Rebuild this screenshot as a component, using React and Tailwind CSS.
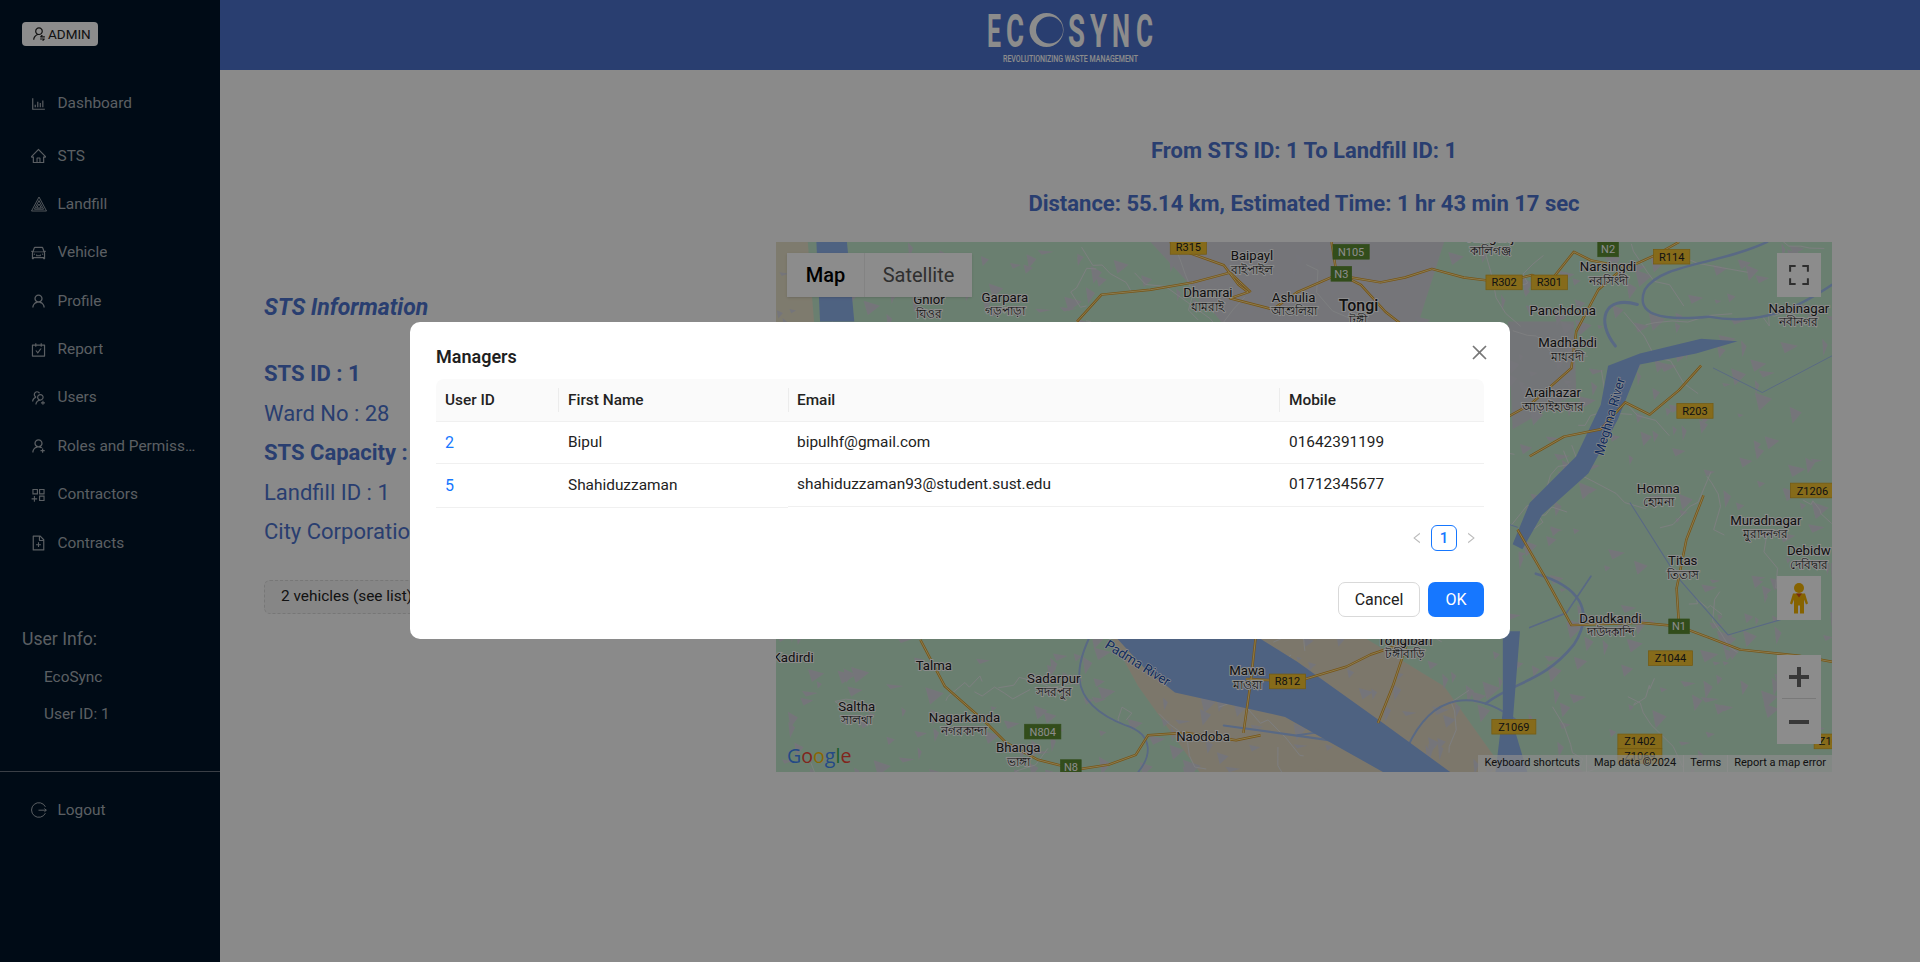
import { AiOutlineBarChart, AiOutlineHome, AiOutlineCar, AiOutlineUser, AiOutlineCarryOut, AiOutlineUsergroupAdd, AiOutlineUserAdd, AiOutlineAppstoreAdd, AiOutlineFileAdd, AiOutlineClose, AiOutlineLeft, AiOutlineRight, AiOutlineUserSwitch } from "react-icons/ai";

const LandfillIcon = ({ className }) => (
  <svg viewBox="0 0 16 16" className={className} fill="none" stroke="currentColor" strokeWidth="0.9">
    <path d="M8 1 15.5 15H.5z" />
    <path d="M8 4.6 12.6 13.2H3.4z" />
    <path d="M8 8 10.4 12H5.6z" />
  </svg>
);

const LogoutIcon = ({ className }) => (
  <svg viewBox="0 0 16 16" className={className} fill="none" stroke="currentColor" strokeWidth="1">
    <path d="M14.4 4.8A7.3 7.3 0 1 0 14.4 11.2" />
    <path d="M7.5 8.2h7.8M13.4 6.6l1.9 1.6-1.9 1.6" />
  </svg>
);

const NAV = [
  { label: "Dashboard", icon: AiOutlineBarChart, cls: "mb-1" },
  { label: "STS", icon: AiOutlineHome },
  { label: "Landfill", icon: LandfillIcon, small: true },
  { label: "Vehicle", icon: AiOutlineCar },
  { label: "Profile", icon: AiOutlineUser },
  { label: "Report", icon: AiOutlineCarryOut },
  { label: "Users", icon: AiOutlineUsergroupAdd },
  { label: "Roles and Permissions", icon: AiOutlineUserAdd },
  { label: "Contractors", icon: AiOutlineAppstoreAdd },
  { label: "Contracts", icon: AiOutlineFileAdd },
];

const ROWS = [
  { id: 2, name: "Bipul", email: "bipulhf@gmail.com", mobile: "01642391199" },
  { id: 5, name: "Shahiduzzaman", email: "shahiduzzaman93@student.sust.edu", mobile: "01712345677" },
];

function rng(seed) {
  let s = seed;
  return () => {
    s = (s * 16807) % 2147483647;
    return s / 2147483647;
  };
}

// scattered grey patches of the terrain tiles
function makePatches() {
  const r = rng(77);
  const out = [];
  for (let i = 0; i < 760; i++) {
    const x = 634 + r() * 863;
    const y = 197 + r() * 433;
    const a = 3 + r() * 12;
    const b = 3 + r() * 12;
    out.push(`${x.toFixed(1)},${y.toFixed(1)} ${(x + a).toFixed(1)},${(y + b * 0.35).toFixed(1)} ${(x + a * 0.25).toFixed(1)},${(y + b).toFixed(1)}`);
  }
  return out;
}

// thin pale local roads
function makeLanes() {
  const r = rng(4242);
  const out = [];
  for (let i = 0; i < 70; i++) {
    let x = 634 + r() * 863;
    let y = 197 + r() * 433;
    let d = `M${x.toFixed(1)} ${y.toFixed(1)}`;
    const dx = (r() - 0.5) * 26;
    const dy = (r() - 0.5) * 26;
    for (let k = 0; k < 5; k++) {
      x += dx + (r() - 0.5) * 18;
      y += dy + (r() - 0.5) * 18;
      d += `L${x.toFixed(1)} ${y.toFixed(1)}`;
    }
    out.push(d);
  }
  return out;
}

const PATCHES = makePatches();
const LANES = makeLanes();

const PLACES = [
  ["Garpara", 821, 246, "গড়পাড়া"], ["Ghior", 759, 248, "ঘিওর"], ["Dhamrai", 987, 242, "ধামরাই"], ["Baipayl", 1023, 212, "বাইপাইল"],
  ["Ashulia", 1057, 246, "আশুলিয়া"], ["Narsingdi", 1314, 221, "নরসিংদী"], ["Panchdona", 1277, 257], ["Madhabdi", 1281, 283, "মাধবদী"],
  ["Araihazar", 1269, 324, "আড়াইহাজার"], ["Nabinagar", 1470, 255, "নবীনগর"], ["Homna", 1355, 402, "হোমনা"], ["Muradnagar", 1443, 428, "মুরাদনগর"],
  ["Debidw", 1478, 453, "দেবিদ্বার"], ["Titas", 1375, 461, "তিতাস"], ["Daudkandi", 1316, 508, "দাউদকান্দি"], ["Kadirdi", 648, 540],
  ["Talma", 763, 547], ["Sadarpur", 861, 557, "সদরপুর"], ["Saltha", 700, 580, "সালথা"], ["Nagarkanda", 788, 589, "নগরকান্দা"],
  ["Bhanga", 832, 614, "ভাঙ্গা"], ["Mawa", 1019, 551, "মাওয়া"], ["Naodoba", 983, 605], ["Tongibari", 1148, 526, "টঙ্গীবাড়ি"], ["Kaliganj", 1218, 197, "কালিগঞ্জ"],
];

const SHIELDS = [
  ["R315", 971, 201, 1], ["N105", 1104, 205, 0], ["N3", 1096, 223, 0], ["N2", 1314, 203, 0], ["R114", 1366, 209, 1], ["R302", 1229, 230, 1],
  ["R301", 1266, 230, 1], ["R203", 1385, 335, 1], ["Z1206", 1481, 400, 1], ["N1", 1372, 511, 0], ["Z1044", 1365, 537, 1], ["Z1069", 1237, 593, 1],
  ["Z1402", 1340, 605, 1], ["Z1069", 1340, 617, 1], ["R812", 1052, 556, 1], ["N804", 852, 597, 0], ["N8", 875, 626, 0], ["Z10", 1494, 605, 1],
];

const ROADS = [
  "M956 197 972 206 1000 216 1012 232 1020 238 1005 243 1040 252 1060 238 1092 224 1128 230 1148 226 1170 219 1196 226 1228 230 1252 224 1266 230 1286 205 1300 212 1330 218 1352 208 1372 197",
  "M1088 197 1092 222 1112 232 1132 254 1150 268 1156 290 1178 318 1196 340 1210 352",
  "M880 262 900 240 940 236 975 230 1005 222 1022 238",
  "M1210 352 1250 330 1284 300 1288 270 1306 236 1322 222",
  "M752 522 772 560 806 590 822 606 848 620 880 628 906 624 928 616 938 600 968 598 1010 604 1030 600",
  "M1026 520 1022 556 1016 598",
  "M1018 554 1060 556 1100 544 1120 534 1150 524",
  "M1240 432 1262 470 1284 510 1340 508 1372 511 1396 520 1422 530 1470 535 1497 540",
  "M1372 511 1370 480 1378 440 1392 404",
  "M1390 298 1372 318 1348 338 1328 328 1308 350 1278 356 1250 372",
  "M1150 524 1138 560 1126 590",
];

const STREAMS = [
  ["M1444 197C1404 216 1358 214 1344 236 1336 256 1356 262 1396 258 1440 266 1470 250 1497 232", 2],
  ["M1338 248C1310 240 1304 262 1320 282", 2.5],
  ["M1255 468C1290 478 1304 498 1286 526 1262 556 1238 556 1214 574", 2.2],
  ["M1242 590C1204 560 1170 566 1150 610 1120 600 1090 594 1060 600", 1.6],
  ["M1332 410 1370 470 1412 518 1474 500", 0.9],
  ["M1180 380 1210 420 1240 430", 0.9],
  ["M898 505C878 540 868 572 920 592 944 600 940 618 930 630", 1.5],
  ["M1000 592 1100 606 1176 630", 1.8],
  ["M1300 470 1280 500 1250 512", 1.4],
  ["M1400 300 1440 320 1497 290", 0.8],
];

function MapTiles() {
  return (
    <svg viewBox="634 197 863 433" preserveAspectRatio="none" className="block w-full h-full">
      <rect x="634" y="197" width="863" height="433" fill="#c2e8cc" />
      <polygon points="940,197 1180,197 1160,260 1090,300 1020,290 980,240" fill="#d5d6dc" />
      <polygon points="1232,262 1286,262 1288,320 1236,350" fill="#d2d5da" />
      <polygon points="900,505 1090,505 1180,560 1230,630 980,630 930,560" fill="#e2d9c4" />
      <polygon points="634,197 660,197 668,300 634,300" fill="#e6e0c8" />
      <polygon points="1090,600 1130,610 1090,630 1060,625" fill="#e2d9c4" />
      {PATCHES.map((p, i) => <polygon key={i} points={p} fill="#d6d6de" />)}
      <g fill="none" stroke="#e4e6ea" strokeWidth="0.8" strokeLinejoin="round">
        {LANES.map((d, i) => <path key={i} d={d} />)}
      </g>
      <g fill="none" stroke="#a2bff0" strokeLinecap="round" strokeLinejoin="round">
        {STREAMS.map(([d, w], i) => <path key={i} d={d} strokeWidth={w} />)}
      </g>
      <polygon points="1314,298 1340,288 1390,276 1420,278 1386,288 1340,297 1322,342 1298,386 1260,420 1244,448 1236,444 1250,410 1288,372 1308,330" fill="#8fb2ec" />
      <polygon points="1228,515 1242,515 1236,590 1248,630 1222,630 1228,580" fill="#8fb2ec" />
      <polygon points="898,505 960,505 1020,515 1060,540 1130,590 1185,630 1130,630 1050,585 960,565 935,545" fill="#8fb2ec" />
      <polygon points="667,197 692,197 698,262 670,262" fill="#8fb2ec" />
      <g fill="none">
        {ROADS.map((d, i) => <path key={i} d={d} stroke="#d99a28" strokeWidth="2" strokeLinejoin="round" />)}
        {ROADS.map((d, i) => <path key={i} d={d} stroke="#fde293" strokeWidth="0.8" strokeLinejoin="round" />)}
      </g>
      <g fontFamily="Roboto, 'Noto Sans', sans-serif" textAnchor="middle" fill="#222" stroke="#fff" strokeWidth="1.6" paintOrder="stroke">
        {PLACES.map(([n, x, y, bn]) => (
          <g key={n + x}>
            <text x={x} y={y} fontSize="10.8">{n}</text>
            {bn && <text x={x} y={y + 11} fontSize="9.8">{bn}</text>}
          </g>
        ))}
        <text x="1110" y="253" fontSize="13" fontWeight="500">Tongi</text>
        <text x="1110" y="264" fontSize="10">টঙ্গী</text>
      </g>
      <g fontFamily="Roboto, sans-serif" fontSize="10.8" fill="#1a4fa8" stroke="#fff" strokeWidth="1" paintOrder="stroke">
        <text transform="translate(1310 372) rotate(-74)">Meghna River</text>
        <text transform="translate(902 528) rotate(32)">Padma River</text>
      </g>
      {SHIELDS.map(([t, x, y, yellow], i) => (
        <g key={i}>
          <rect x={x - (t.length * 3.2 + 2)} y={y - 6} width={t.length * 6.4 + 4} height="12" fill={yellow ? "#f4c430" : "#5b8c32"} stroke={yellow ? "#d5a520" : "#5b8c32"} strokeWidth="0.6" />
          <text x={x} y={y + 3.3} fontSize="9" textAnchor="middle" fontFamily="Roboto, sans-serif" fill={yellow ? "#222" : "#fff"}>{t}</text>
        </g>
      ))}
      <text x="643" y="623" fontSize="16" fontFamily="'Open Sans', Roboto, sans-serif" fontWeight="500">
        <tspan fill="#4285f4">G</tspan><tspan fill="#ea4335">o</tspan><tspan fill="#fbbc05">o</tspan><tspan fill="#4285f4">g</tspan><tspan fill="#34a853">l</tspan><tspan fill="#ea4335">e</tspan>
      </text>
    </svg>
  );
}

const LOGO_LETTERS = [
  ["E", 2, 14], ["C", 21, 18], ["S", 83, 17], ["Y", 105, 17], ["N", 127, 18], ["C", 151, 17],
];

function Logo() {
  return (
    <svg viewBox="0 0 170 56" className="w-[170px] h-[56px]" fill="#fff" fontFamily="Roboto, sans-serif">
      {LOGO_LETTERS.map(([c, x, w]) => (
        <text key={x} x={x} y="37" fontSize="47" fontWeight="700" textLength={w} lengthAdjust="spacingAndGlyphs">{c}</text>
      ))}
      <circle cx="61.5" cy="20" r="17" />
      <circle cx="64.5" cy="20" r="13.5" fill="#4c72cc" />
      <text x="18" y="52" fontSize="8.5" fontWeight="500" textLength="135" lengthAdjust="spacingAndGlyphs">REVOLUTIONIZING WASTE MANAGEMENT</text>
    </svg>
  );
}

function Sidebar() {
  return (
    <aside className="w-[220px] shrink-0 bg-[#001529] text-[#a6adb4] h-full">
      <div className="pt-[22px] pl-[22px]">
        <button className="flex items-center gap-[1px] h-6 w-[76px] pl-[9px] rounded-[4px] bg-white text-[#222] text-[13.5px]">
          <AiOutlineUserSwitch className="w-[16px] h-[16px]" />
          ADMIN
        </button>
      </div>
      <nav className="mt-[33.5px] pl-[30px] pr-[24px]">
        {NAV.map(({ label, icon: Icon, cls, small }) => (
          <div key={label} className={`flex items-center h-[48.4px] text-[15.4px] ${cls || ""}`}>
            <span className="w-[17px] mr-[10.5px] flex justify-center shrink-0">
              <Icon className={small ? "w-[16px] h-[16px]" : "w-[18px] h-[18px]"} />
            </span>
            <span className="truncate">{label}</span>
          </div>
        ))}
      </nav>
      <div className="mt-[59px] pl-[22px] text-[17.6px] leading-[27px]">User Info:</div>
      <div className="mt-[12px] pl-[44px] text-[15.4px] leading-[24px]">EcoSync</div>
      <div className="mt-[13px] pl-[44px] text-[15.4px] leading-[24px]">User ID: 1</div>
      <div className="mt-[45px] border-t border-[#6b7480]" />
      <div className="mt-[26px] pl-[30px] flex items-center h-6 text-[15.4px]">
        <span className="w-[17px] mr-[10.5px] flex justify-center shrink-0">
          <LogoutIcon className="w-[16px] h-[16px]" />
        </span>
        Logout
      </div>
    </aside>
  );
}

function GoogleMap() {
  return (
    <div className="relative w-[1056px] h-[530px] overflow-hidden">
      <MapTiles />
      <div className="absolute left-[11px] top-[11px] flex h-11 bg-white shadow text-[20px] font-['Roboto']">
        <div className="w-[77px] flex items-center justify-center font-medium text-black">Map</div>
        <div className="w-[108px] flex items-center justify-center text-[#565656] border-l border-[#eee]">Satellite</div>
      </div>
      <div className="absolute right-[11px] top-[11px] w-11 h-11 bg-white flex items-center justify-center">
        <svg viewBox="0 0 18 18" className="w-5 h-5" fill="none" stroke="#555" strokeWidth="1.8"><path d="M1 6V1h5M12 1h5v5M17 12v5h-5M6 17H1v-5" /></svg>
      </div>
      <div className="absolute right-[11px] top-[334px] w-11 h-11 bg-white flex items-center justify-center">
        <svg viewBox="0 0 20 32" className="w-[20px] h-[33px]"><circle cx="10" cy="5.5" r="5" fill="#f5b400" /><path d="M4 11h12l3 10-2 1-2-5v14h-4v-8h-2v8H5V17l-2 5-2-1z" fill="#f5b400" /><path d="M7 11h6l-3 4z" fill="#d9501e" /></svg>
      </div>
      <div className="absolute right-[11px] top-[413px] w-11 h-[89px] bg-white flex flex-col items-center">
        <svg viewBox="0 0 20 20" className="w-5 h-5 mt-[12px]" fill="#666"><path d="M8 0h4v8h8v4h-8v8H8v-8H0V8h8z" /></svg>
        <div className="w-[34px] border-t border-[#ddd] mt-[11px]" />
        <svg viewBox="0 0 20 4" className="w-5 h-1 mt-[21px]" fill="#666"><rect width="20" height="4" /></svg>
      </div>
      <div className="absolute right-0 bottom-0 h-[17px] flex items-center bg-white/70 text-[11px] text-[#222] font-['Roboto'] whitespace-nowrap">
        <span className="px-[6px]">Keyboard shortcuts</span>
        <span className="px-[7px] border-l border-white/80">Map data ©2024</span>
        <span className="px-[6px] border-l border-white/80">Terms</span>
        <span className="pl-[6px] pr-[6px] border-l border-white/80">Report a map error</span>
      </div>
    </div>
  );
}

function ManagersModal() {
  const hCell = "h-[43px] flex items-center pt-px font-medium border-b border-[#f0f0f0] bg-[#fafafa] relative";
  const pads = ["pl-[9px]", "pl-[10px]", "pl-[9px]", "pl-[10px]"];
  return (
    <div className="absolute inset-0 bg-black/45 flex justify-center items-start pt-[322px]">
      <div className="relative w-[1100px] h-[317px] bg-white rounded-[10px] px-[26px] pt-[24px] text-[15.4px] text-[#222]">
        <AiOutlineClose className="absolute right-[20px] top-[20px] w-[21px] h-[21px] text-[#777]" />
        <h2 className="text-[18px] leading-[22px] font-semibold text-[#1f1f1f]">Managers</h2>
        <div className="mt-[11px] grid grid-cols-[122px_230px_491px_205px] items-start">
          {["User ID", "First Name", "Email", "Mobile"].map((h, i) => (
            <div key={h} className={`${hCell} ${pads[i]} ${i === 0 ? "rounded-tl-[8px]" : ""} ${i === 3 ? "rounded-tr-[8px]" : ""}`}>
              {i > 0 && <span className="absolute left-0 top-[9px] h-[24px] border-l border-[#ececec]" />}
              {h}
            </div>
          ))}
          {ROWS.map((row, idx) => (
            <div key={row.id} className="contents">
              <div className={`${idx ? "h-[44px] pt-px" : "h-[42px]"} flex items-center ${pads[0]} border-b border-[#f0f0f0] text-[#1677ff] text-[16px]`}>{row.id}</div>
              <div className={`${idx ? "h-[44px] pt-px" : "h-[42px]"} flex items-center ${pads[1]} border-b border-[#f0f0f0]`}>{row.name}</div>
              <div className={`${idx ? "h-[43px]" : "h-[42px]"} flex items-center ${pads[2]} border-b border-[#f0f0f0]`}>{row.email}</div>
              <div className={`${idx ? "h-[43px]" : "h-[42px]"} flex items-center ${pads[3]} border-b border-[#f0f0f0]`}>{row.mobile}</div>
            </div>
          ))}
        </div>
        <div className="mt-[17px] flex items-center justify-end pr-[6px] gap-[4px]">
          <AiOutlineLeft className="w-[14px] h-[14px] text-[#bbb] mr-[3px]" />
          <div className="w-[26px] h-[26px] rounded-[6px] border border-[#1677ff] text-[#1677ff] font-medium text-[15px] flex items-center justify-center">1</div>
          <AiOutlineRight className="w-[14px] h-[14px] text-[#bbb] ml-[3px]" />
        </div>
        <div className="mt-[31px] flex justify-end gap-2 text-[16px]">
          <button className="w-[82px] h-[35px] rounded-[7px] border border-[#d9d9d9] bg-white">Cancel</button>
          <button className="w-[56px] h-[35px] rounded-[7px] bg-[#1677ff] text-white">OK</button>
        </div>
      </div>
    </div>
  );
}

export default function App() {
  return (
    <div className="relative flex h-[962px] overflow-hidden bg-[#fbfbfb] font-['Roboto',sans-serif]">
      <Sidebar />
      <div className="flex-1 min-w-0">
        <header className="h-[70px] bg-[#4c72cc] flex justify-center items-start pt-[10px]">
          <Logo />
        </header>
        <main className="flex pl-[44px] text-[#4c72cc]">
          <section className="w-[512px] shrink-0 pt-[223px] text-[22px] whitespace-nowrap">
            <h3 className="font-bold italic text-[23px] leading-[30px]">STS Information</h3>
            <div className="mt-[35px] space-y-[8.5px] leading-[31px]">
              <p className="font-bold">STS ID : 1</p>
              <p>Ward No : 28</p>
              <p className="font-bold">STS Capacity : 500</p>
              <p>Landfill ID : 1</p>
              <p>City Corporation : Dhaka</p>
            </div>
            <button className="mt-[33px] h-[34px] w-[180px] pl-[16px] text-left rounded-[6px] border border-dashed border-[#d9d9d9] bg-[#f5f5f5] text-[15.4px] text-[#222]">2 vehicles (see list)</button>
          </section>
          <section className="w-[1056px] shrink-0 pt-[66px]">
            <h2 className="text-center text-[22px] font-bold leading-[30px]">From STS ID: 1 To Landfill ID: 1</h2>
            <h2 className="mt-[23px] text-center text-[22px] font-bold leading-[30px]">Distance: 55.14 km, Estimated Time: 1 hr 43 min 17 sec</h2>
            <div className="mt-[23px]"><GoogleMap /></div>
          </section>
        </main>
      </div>
      <ManagersModal />
    </div>
  );
}
